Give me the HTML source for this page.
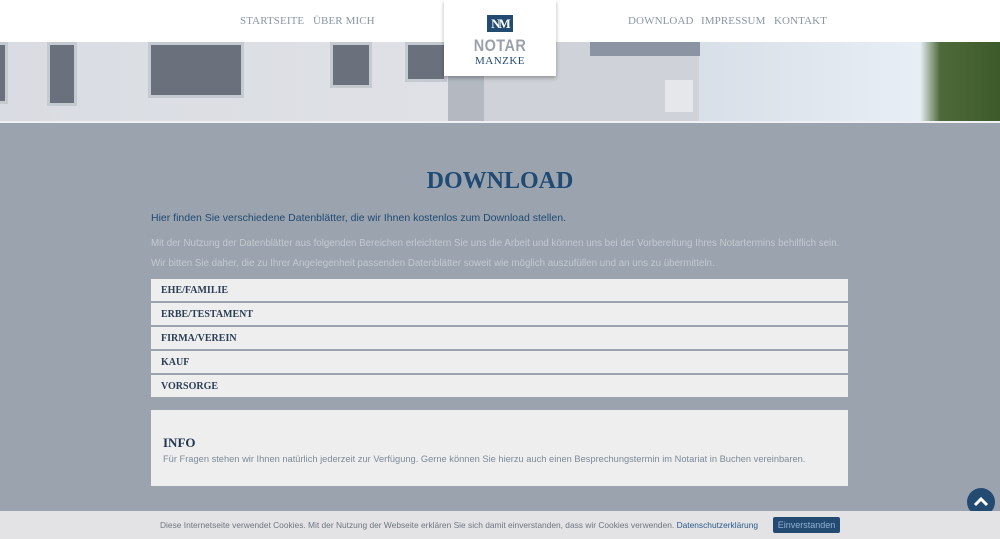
<!DOCTYPE html>
<html><head><meta charset="utf-8"><style>
*{margin:0;padding:0;box-sizing:border-box}
body{width:1000px;height:539px;overflow:hidden;background:#9ba3ae;font-family:"Liberation Sans",sans-serif;position:relative}
.nav{position:absolute;top:0;left:0;width:1000px;height:42px;background:#fff}
.nav a{position:absolute;top:15px;font-family:"Liberation Serif",serif;font-size:11px;color:#8a96a3;letter-spacing:.1px}
.hero{position:absolute;top:42px;left:0;width:1000px;height:80px;background:linear-gradient(90deg,#d9dce2 0%,#dfe1e6 45%,#c9ccd3 46%,#cfd2d8 68%,#d8dfe8 70%,#e8eef5 92%,#4f6a3a 94%,#3c5a2a 100%)}
.win{position:absolute;background:#6a717d;border:3px solid #c5c9d0}
.logo{position:absolute;left:444px;top:0;width:112px;height:76px;background:#fff;box-shadow:0 2px 4px rgba(0,0,0,.3);text-align:center}
.mark{position:absolute;left:487px;top:15px;width:26px;height:17px;background:#234b72;color:#fff;font-family:"Liberation Serif",serif;font-weight:bold;font-size:13px;line-height:17px;text-align:center;letter-spacing:-2px}
.sep{position:absolute;top:121px;left:0;width:1000px;height:2px;background:#eef0f3}
h1{position:absolute;top:168px;width:1000px;text-align:center;font-family:"Liberation Serif",serif;font-size:24px;color:#1f4a73;font-weight:bold}
.p1{position:absolute;left:151px;top:212px;font-size:10.5px;color:#1f4a73}
.p2{position:absolute;left:151px;font-size:9.75px;color:#c4c9d0}
.row{position:absolute;left:151px;width:697px;height:22px;background:#eeeeee;font-family:"Liberation Serif",serif;font-weight:bold;font-size:10px;color:#2a3e56;padding:6px 10px}
.info{position:absolute;left:151px;top:410px;width:697px;height:76px;background:#eeeeee}
.cookie{position:absolute;left:0;top:511px;width:1000px;height:28px;background:#e3e3e5;font-size:8.4px;color:#6f7680}
.btn{position:absolute;left:773px;top:6px;width:67px;height:16px;background:#234b72;color:#8fb0d0;font-size:9px;text-align:center;line-height:16px;border-radius:2px}
.up{position:absolute;left:967px;top:488px;width:28px;height:28px;border-radius:50%;background:#234b72}
</style></head><body>
<div class="hero">
<div class="win" style="left:-4px;top:0;width:12px;height:62px"></div>
<div class="win" style="left:47px;top:0;width:30px;height:64px"></div>
<div class="win" style="left:148px;top:0;width:96px;height:56px"></div>
<div class="win" style="left:330px;top:0;width:42px;height:46px"></div>
<div class="win" style="left:405px;top:0;width:42px;height:40px"></div>
<div style="position:absolute;left:448px;top:0;width:36px;height:80px;background:#b3b8c1"></div>
<div style="position:absolute;left:484px;top:0;width:215px;height:80px;background:#cfd2d8"></div>
<div style="position:absolute;left:590px;top:0;width:110px;height:14px;background:#8a94a3"></div>
<div style="position:absolute;left:665px;top:38px;width:28px;height:32px;background:#e6e7ea"></div>
</div>
<div class="sep"></div>
<div class="nav">
<a style="left:240px">STARTSEITE</a><a style="left:313px">ÜBER MICH</a>
<a style="left:628px">DOWNLOAD</a><a style="left:701px">IMPRESSUM</a><a style="left:774px">KONTAKT</a>
</div>
<div class="logo">
<div style="position:absolute;top:36px;width:112px;font-size:17px;font-weight:bold;color:#9aa1ab;letter-spacing:.5px;transform:scaleX(.85)">NOTAR</div>
<div style="position:absolute;top:55px;width:112px;font-family:'Liberation Serif',serif;font-size:11px;color:#234b72;letter-spacing:.5px">MANZKE</div>
</div>
<div class="mark">NM</div>
<h1>DOWNLOAD</h1>
<div class="p1">Hier finden Sie verschiedene Datenblätter, die wir Ihnen kostenlos zum Download stellen.</div>
<div class="p2" style="top:238px">Mit der Nutzung der Datenblätter aus folgenden Bereichen erleichtern Sie uns die Arbeit und können uns bei der Vorbereitung Ihres Notartermins behilflich sein.</div>
<div class="p2" style="top:258px">Wir bitten Sie daher, die zu Ihrer Angelegenheit passenden Datenblätter soweit wie möglich auszufüllen und an uns zu übermitteln.</div>
<div class="row" style="top:279px">EHE/FAMILIE</div>
<div class="row" style="top:303px">ERBE/TESTAMENT</div>
<div class="row" style="top:327px">FIRMA/VEREIN</div>
<div class="row" style="top:351px">KAUF</div>
<div class="row" style="top:375px">VORSORGE</div>
<div class="info">
<div style="position:absolute;left:12px;top:25px;font-family:'Liberation Serif',serif;font-weight:bold;font-size:13px;color:#1f3550">INFO</div>
<div style="position:absolute;left:12px;top:44px;font-size:9.3px;color:#7c8a9a">Für Fragen stehen wir Ihnen natürlich jederzeit zur Verfügung. Gerne können Sie hierzu auch einen Besprechungstermin im Notariat in Buchen vereinbaren.</div>
</div>
<div class="up"><svg width="28" height="28"><path d="M8 17 L14 11 L20 17" stroke="#fff" stroke-width="3" fill="none"/></svg></div>
<div class="cookie"><div style="position:absolute;left:160px;top:9px">Diese Internetseite verwendet Cookies. Mit der Nutzung der Webseite erklären Sie sich damit einverstanden, dass wir Cookies verwenden. <span style="color:#2a5a8a">Datenschutzerklärung</span></div><div class="btn">Einverstanden</div></div>
</body></html>
